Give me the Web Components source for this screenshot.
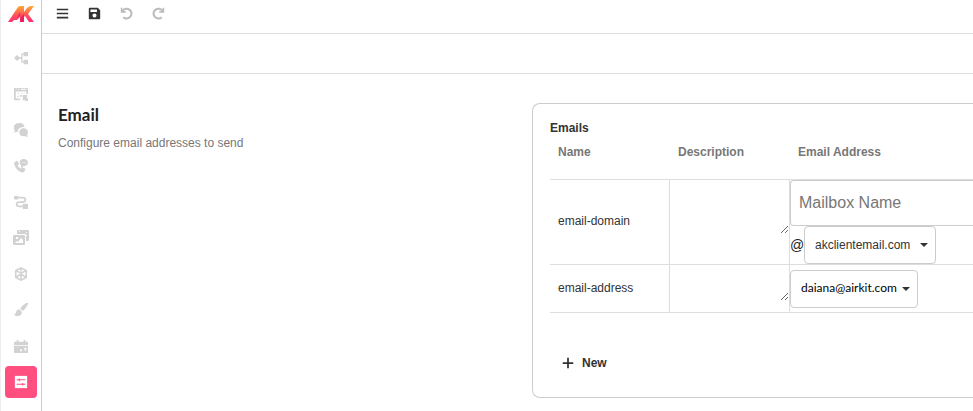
<!DOCTYPE html>
<html lang="en">
<head>
<meta charset="utf-8">
<title>Email settings</title>
<style>
html, body { margin: 0; height: 100%; }
body { font: 12px/16px "Liberation Sans", Arial, sans-serif; color: #333; background: #fff; overflow: hidden; }
</style>
</head>
<body>
<ak-app></ak-app>
<script>
const define = (name, html) => customElements.define(name, class extends HTMLElement {
  connectedCallback() {
    if (this.shadowRoot) return;
    const template = document.createElement('template');
    template.innerHTML = typeof html === 'function' ? html(this) : html;
    this.attachShadow({ mode: 'open' }).append(template.content.cloneNode(true));
  }
});

const icons = {
  flow: '<path d="M3.500 4.500L7 8l-3.500 3.500L0 8zM11 1h5v5h-5zM11 10h5v5h-5z"/><path d="M4 8h5M12 3.500H9v9h3" fill="none" stroke="currentColor" stroke-width="1.500"/>',
  window: '<path fill-rule="evenodd" d="M1 1h14q1 0 1 1v6h-2V5H2v8h5v2H1q-1 0-1-1V2q0-1 1-1zm1 1v1h1V2zm3 0v1h1V2zm3 0v1h6V2zM4 7h2v1H4zM4 10h2v1H4zM8 7h1v1H8zM11 7h1v1h-1zM7 9h2v2H7zM10 9h5v4h1v3h-3v-1h-3z"/>',
  chats: '<path d="M6 0c4 0 6 2 6 4.500C7 4.500 4 7 4.500 10L0 11l1-2C-2 5 0 0 6 0z"/><path d="M11 6c3 0 5 2 5 4.500 0 1.200-.5 2.300-1 3l1 2.500-3-1c-4 1-7-1-7-4.500C6 8 8 6 11 6z"/>',
  call: '<path d="M1 3l3-1 2 4-2 1c1 2 2 3 4 4l1-2 4 2-1 3q-1 2-3 1C4 14 1 9 0 5q0-1 1-2z"/><path d="M11 0c3 0 5 1.500 5 4s-2 4-5 4l-3 2V7C5 4 7 0 11 0z"/><path d="M9 4h1M11 4h1M13 4h1" stroke="#fff" stroke-width="1"/>',
  route: '<path d="M3 3h7q3 0 3 2.500T10 8H6Q3 8 3 10.500T6 13h5" fill="none" stroke="currentColor" stroke-width="2"/><rect y="1" width="5" height="4" rx="1"/><rect x="10" y="10" width="6" height="6" rx="1"/>',
  images: '<path fill-rule="evenodd" d="M5 0h10q1 0 1 1v9q0 1-1 1h-2V5q0-1-1-1H4V1q0-1 1-1zm1 1v1h1V1zm7 1v1h1V2zm0 3v1h1V5zM1 5h10q1 0 1 1v8q0 1-1 1H1q-1 0-1-1V6q0-1 1-1zm1 8h8v-3L8 8l-3 4-1-1-2 2zm1-6v2h2V7z"/>',
  cube: '<path d="M8 1l6 3v8l-6 3-6-3V4zM2 4l6 3 6-3M8 7v8M2 12l6-4 6 4M8 1v4" fill="none" stroke="currentColor" stroke-width="1.800"/>',
  brush: '<path d="M14 0q2-1 2 1-2 5-6 8L7 6q3-4 7-6zM6 7l3 3q0 5-5 5-3 0-4-2 2 0 2-2 1-4 4-4z"/>',
  calendar: '<path fill-rule="evenodd" d="M3 1h2v2h6V1h2v2h3v4H0V3h3zM0 8h16v8H0zm7 4v2h2v-2zm5-2v3h2v-3z"/>',
  settings: '<path d="M1 1h14v14H1z"/><path d="M3 5.500h10M3 10.500h10M6 4v3M10 9v3" fill="none" stroke="#ff4f81" stroke-width="1.200"/>',
  menu: '<path d="M1 2h14v2H1zM1 7h14v2H1zM1 12h14v2H1z"/>',
  save: '<path fill-rule="evenodd" d="M2 1h10l3 3v10q0 1-1 1H2q-1 0-1-1V2q0-1 1-1zm1 2v3h8V3zm5 5a2 2 0 100 5 2 2 0 000-5z"/>',
  undo: '<path d="M3 5a6 6 0 11 1 7.500" fill="none" stroke="currentColor" stroke-width="2.500"/><path d="M1 1v6h6V5H3V1z"/>',
  redo: '<path d="M13 5a6 6 0 10-1 7.500" fill="none" stroke="currentColor" stroke-width="2.500"/><path d="M15 1v6H9V5h4V1z"/>',
  plus: '<path d="M7 2h2v5h5v2H9v5H7V9H2V7h5z"/>'
};

define('ak-icon', el => `<style>:host{display:block;width:14px;height:14px}svg{display:block;width:100%;height:100%;fill:currentColor}</style>
<svg viewBox="0 0 16 16" aria-hidden="true">${icons[el.getAttribute('name')]}</svg>`);

define('ak-logo', `<style>:host{display:block;width:26px;height:16px}svg{display:block;width:100%;height:100%}</style>
<svg viewBox="0 0 26 16" role="img" aria-label="Airkit"><defs><linearGradient id="g" x2="0" y2="1"><stop stop-color="#ffab30"/><stop offset=".5" stop-color="#ff5b55"/><stop offset="1" stop-color="#ff2d76"/></linearGradient></defs>
<path fill="url(#g)" d="M0 16L10 1q1-1 2-1h4v6l3-4q2-2 4-2h3l-6 8 6 8h-5l-4-6-1 1v5h-4v-5l-1 1-2 2H6L4 16z"/><path fill="#e92162" d="M12 6v4l-3 2zM12 12l4-4v8h-4z"/></svg>`);

define('ak-icon-button', el => `<style>:host{display:block}button{display:flex;align-items:center;justify-content:center;width:32px;height:32px;padding:0;border:0;border-radius:4px;background:none;color:#d2d2d2}
:host([tone=dark]) button{color:#333}:host([tone=muted]) button{color:#bbb}:host([active]) button{background:#ff4f81;color:#fff}:host([tone]) ak-icon{width:13px;height:13px}:host([icon=images]) ak-icon{width:16px;height:16px}</style>
<button type="button" aria-label="${el.getAttribute('label')}"><ak-icon name="${el.getAttribute('icon')}"></ak-icon></button>`);

define('ak-sidebar', `<style>:host{display:flex;flex-direction:column;align-items:center;box-sizing:border-box;width:42px;border-left:1px solid #eee;border-right:1px solid #ccc;padding-top:6px}nav{display:grid;gap:4px;margin-top:20px}</style>
<ak-logo></ak-logo><nav aria-label="Sections">
${[['flow','Journeys'],['window','Web'],['chats','Messages'],['call','Voice'],['route','Connections'],['images','Media'],['cube','Objects'],['brush','Theme'],['calendar','Events']].map(([i,l]) => `<ak-icon-button icon="${i}" label="${l}"></ak-icon-button>`).join('')}
<ak-icon-button icon="settings" label="Settings" active></ak-icon-button></nav>`);

define('ak-toolbar', `<style>:host{display:block}.tools{display:flex;align-items:center;box-sizing:border-box;height:34px;padding:0 4px 6px;border-bottom:1px solid #ddd}.sub{height:39px;border-bottom:1px solid #ddd}</style>
<div class="tools" role="toolbar"><slot></slot></div><div class="sub"></div>`);

define('ak-select', el => `<style>:host{display:inline-grid;align-items:center}select,svg{grid-area:1/1}
select{appearance:none;box-sizing:border-box;height:38px;margin:0;padding:0 24px 0 10px;border:1px solid #ccc;border-radius:4px;background:#fff;color:#333;font:12px "Liberation Sans",Arial,sans-serif}
svg{justify-self:end;width:8px;height:4px;margin-right:8px;fill:#333;pointer-events:none}
:host([face=alt]) select{font:400 12px Lato,sans-serif;color:#000;padding-right:20px;padding-bottom:2px}</style>
<select aria-label="${el.getAttribute('label')}"><option>${el.getAttribute('value')}</option></select><svg viewBox="0 0 8 4" aria-hidden="true"><path d="M0 0h8L4 4z"/></svg>`);

define('ak-email-table', `<style>:host{display:block}
table{width:100%;border-collapse:separate;border-spacing:0;table-layout:fixed}
th,td{padding:0;text-align:left;border-bottom:1px solid #ddd;vertical-align:middle}
th{height:44px;padding:8px 8px 19px;box-sizing:border-box;color:#777;line-height:16px}
.narrow{width:120px;box-sizing:border-box}
td.narrow{border-right:1px solid #ddd}td:first-child{padding:0 0 2px 8px}
td{height:47px}
textarea{display:block;box-sizing:border-box;width:100%;height:24px;padding:4px;border:0;background:none;font:inherit;resize:both;overflow:hidden}
input{display:block;box-sizing:border-box;width:100%;height:46px;padding:0 8px;border:1px solid #ccc;border-right:0;border-radius:4px 0 0 4px;font:16px "Liberation Sans",Arial,sans-serif;color:#333}
input::placeholder{color:#777}
.domain{display:flex;align-items:center}.at{font-size:14px;width:14px;color:#222}
ak-select{vertical-align:middle}
</style>
<table><thead><tr><th class="narrow">Name</th><th class="narrow">Description</th><th>Email Address</th></tr></thead>
<tbody><tr><td class="narrow">email-domain</td><td class="narrow"><textarea aria-label="Description of email-domain"></textarea></td><td><input type="text" placeholder="Mailbox Name" aria-label="Mailbox Name"><div class="domain"><span class="at">@</span><ak-select label="Domain" value="akclientemail.com"></ak-select></div></td></tr>
<tr><td class="narrow">email-address</td><td class="narrow"><textarea aria-label="Description of email-address"></textarea></td><td><ak-select face="alt" label="Email address" value="daiana@airkit.com"></ak-select></td></tr></tbody></table>`);

define('ak-card', `<style>:host{display:block;border:1px solid #ccc;border-right:0;border-radius:8px 0 0 8px;padding:16px 0 18px 17px}h2{margin:0;font-size:12px;line-height:16px}</style>
<h2><slot name="title"></slot></h2><slot></slot>`);

define('ak-add-button', `<style>:host{display:block;margin-top:34px}button{display:flex;align-items:center;gap:7px;height:32px;padding:0 11px;border:0;background:none;color:#333;font:bold 12px/16px "Liberation Sans",Arial,sans-serif}</style>
<button type="button"><ak-icon name="plus"></ak-icon><slot></slot></button>`);

define('ak-section', `<style>:host{display:grid;grid-template-columns:minmax(0,474fr) minmax(0,441fr);align-items:start;padding:29px 0 0 16px}
h1{margin:2px 0 10px;font:bold 17px/20px Lato,sans-serif;color:#222}p{margin:0;color:#777}</style>
<header><h1><slot name="heading"></slot></h1><p><slot name="hint"></slot></p></header><slot></slot>`);

define('ak-app', `<style>:host{display:grid;grid-template-columns:auto minmax(0,1fr);min-height:100vh}</style>
<ak-sidebar></ak-sidebar>
<main><ak-toolbar>
<ak-icon-button tone="dark" icon="menu" label="Menu"></ak-icon-button><ak-icon-button tone="dark" icon="save" label="Save"></ak-icon-button><ak-icon-button tone="muted" icon="undo" label="Undo"></ak-icon-button><ak-icon-button tone="muted" icon="redo" label="Redo"></ak-icon-button></ak-toolbar>
<ak-section><span slot="heading">Email</span><span slot="hint">Configure email addresses to send</span>
<ak-card><span slot="title">Emails</span><ak-email-table></ak-email-table><ak-add-button>New</ak-add-button></ak-card></ak-section></main>`);
</script>
</body>
</html>
